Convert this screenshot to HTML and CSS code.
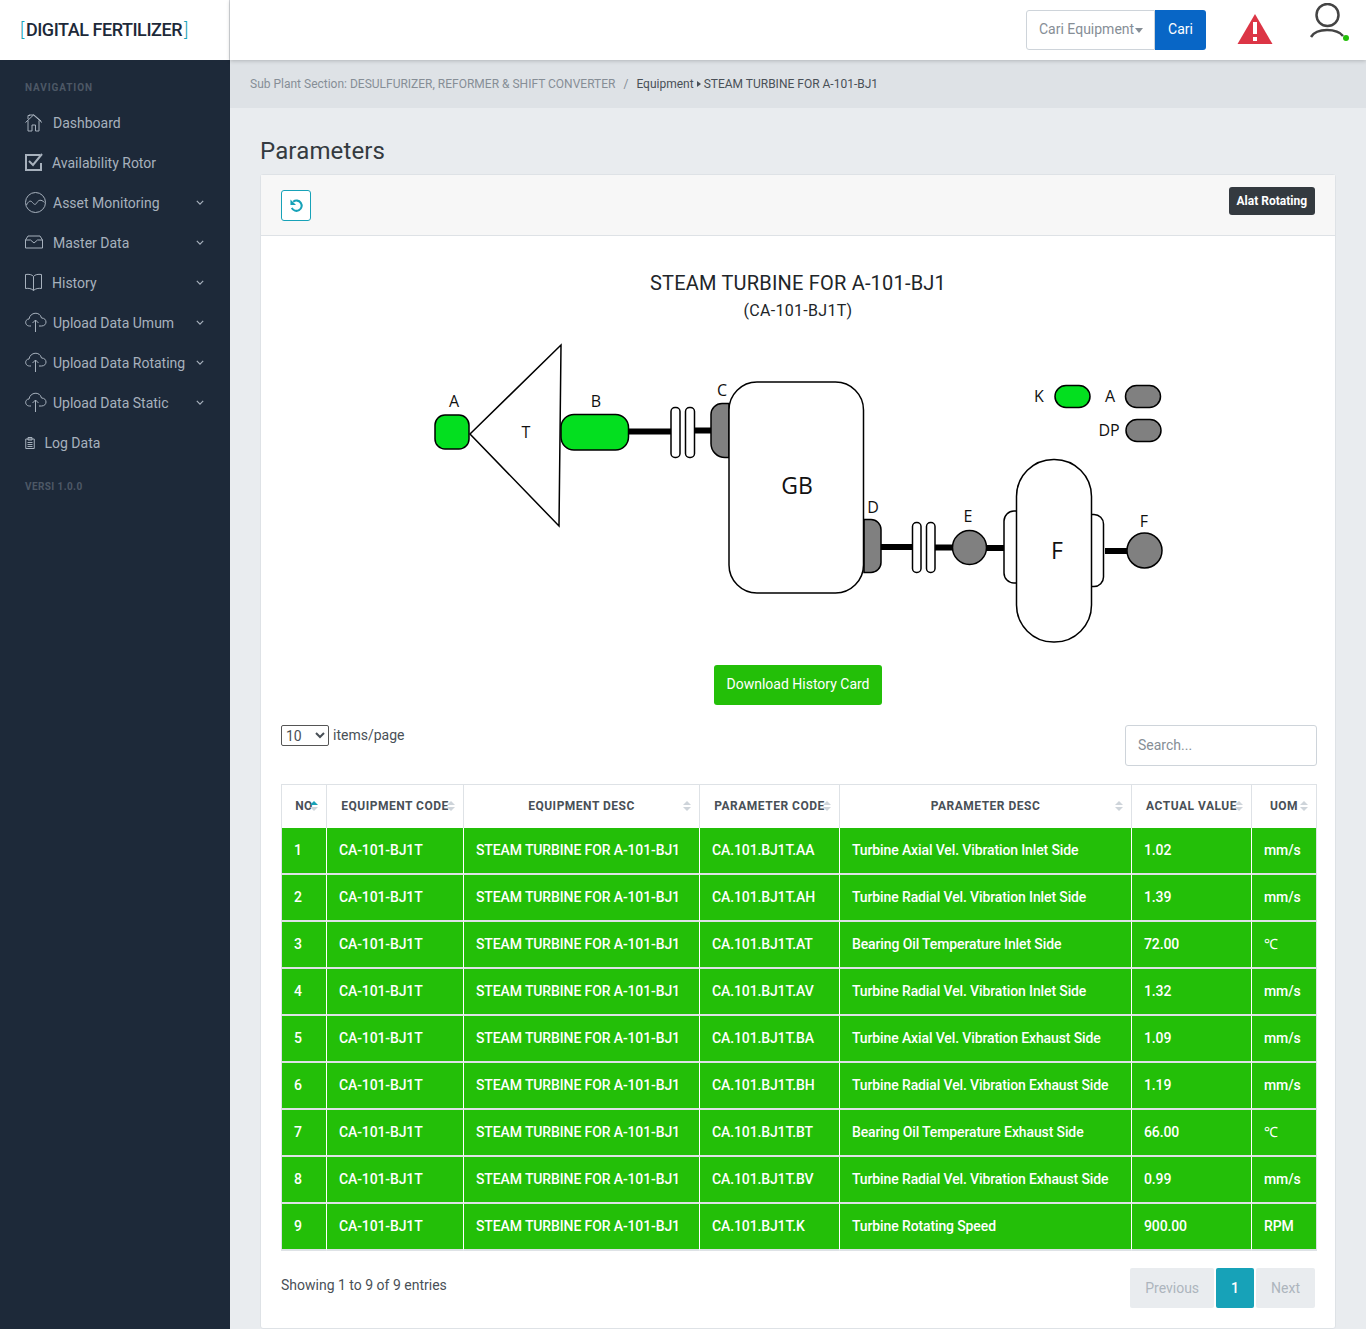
FILE: index.html
```html
<!DOCTYPE html>
<html lang="id">
<head>
    <meta charset="UTF-8">
    <meta name="viewport" content="width=device-width, initial-scale=1.0">
    <title>Digital Fertilizer - Parameters</title>
    <link rel="stylesheet" href="styles.css">
</head>
<body>
    <aside class="sidebar">
        <div class="logo"><span class="bracket">[</span>DIGITAL FERTILIZER<span class="bracket">]</span></div>
        <div class="nav-label">NAVIGATION</div>
        <nav class="nav">
            <a class="nav-item"><svg class="ico w28" viewBox="0 0 28 24"><path d="M.5 11.500 8.500 4l8.500 7.500M3 9.500V20h4v-6h3.500v6H14V9.500M3 8V4.500h2M4 4h5l7 6" /></svg>Dashboard</a>
            <a class="nav-item"><svg class="ico w27 thick" viewBox="0 0 27 24"><path d="M15 4H1v15h15v-7" /><path d="M4 10l4 4 9-11" /></svg>Availability Rotor</a>
            <a class="nav-item"><svg class="ico w28" viewBox="0 0 28 24"><circle cx="10.500" cy="11.500" r="10" /><path d="M1.500 14c2-4 4-5 6-2.500s3 2.500 4.500 0 4-3.500 7.500 0" /></svg>Asset Monitoring<svg class="chev" viewBox="0 0 10 6"><path d="M1 1l4 4 4-4" /></svg></a>
            <a class="nav-item"><svg class="ico w28" viewBox="0 0 28 24"><path d="M.5 9 3 5h12l2.500 4v8H.5zM.5 9h5l3.500 3 3.500-3h5" /></svg>Master Data<svg class="chev" viewBox="0 0 10 6"><path d="M1 1l4 4 4-4" /></svg></a>
            <a class="nav-item"><svg class="ico w27" viewBox="0 0 27 24"><path d="M8.500 5.500C7 3.500 4 3 .5 3.500v14c3-.5 6 0 8 2 2-2 5-2.500 8-2v-14c-3.500-.5-6.500 0-8 2zM8.500 5.500v14" /></svg>History<svg class="chev" viewBox="0 0 10 6"><path d="M1 1l4 4 4-4" /></svg></a>
            <a class="nav-item"><svg class="ico w28" viewBox="0 0 28 24"><path d="M6 15H4.500C-.5 15-.5 8 4 8 5 1 15 0 16.500 7c6 0 6 8 0 8H14M10.500 21V9M7.500 12l3-3 3 3" /></svg>Upload Data Umum<svg class="chev" viewBox="0 0 10 6"><path d="M1 1l4 4 4-4" /></svg></a>
            <a class="nav-item"><svg class="ico w28" viewBox="0 0 28 24"><path d="M6 15H4.500C-.5 15-.5 8 4 8 5 1 15 0 16.500 7c6 0 6 8 0 8H14M10.500 21V9M7.500 12l3-3 3 3" /></svg>Upload Data Rotating<svg class="chev" viewBox="0 0 10 6"><path d="M1 1l4 4 4-4" /></svg></a>
            <a class="nav-item"><svg class="ico w28" viewBox="0 0 28 24"><path d="M6 15H4.500C-.5 15-.5 8 4 8 5 1 15 0 16.500 7c6 0 6 8 0 8H14M10.500 21V9M7.500 12l3-3 3 3" /></svg>Upload Data Static<svg class="chev" viewBox="0 0 10 6"><path d="M1 1l4 4 4-4" /></svg></a>
            <a class="nav-item"><svg class="ico w20" viewBox="0 0 19.500 24"><path d="M.75 8h8.500v9.500H.75zM3 6.500h4V9H3zM2.500 11.500h5M2.500 13.500h5M2.500 15.500h5" /></svg>Log Data</a>
        </nav>
        <div class="nav-label version">VERSI 1.0.0</div>
    </aside>

    <div class="main">
        <header class="topbar">
            <div class="search-group">
                <div class="search-select">Cari Equipment<span class="caret"></span></div>
                <button class="btn-cari">Cari</button>
            </div>
            <svg class="warn" viewBox="0 0 36 32"><path d="M18 1 35.500 31H.5z" fill="#dc3545" /><path d="M16 9h4v12h-4zM16 24h4v4h-4z" fill="#fff" /></svg>
            <div class="user">
                <svg viewBox="0 0 38 38"><circle cx="18.500" cy="12" r="11" /><path d="M2 34c3-5 9-7 16-7s13 2 16 6" /></svg>
                <span class="user-dot"></span>
            </div>
        </header>

        <div class="breadcrumb">
            <span>Sub Plant Section: DESULFURIZER, REFORMER &amp; SHIFT CONVERTER</span>
            <span class="sep">/</span>
            <span class="crumb-dark">Equipment<span class="crumb-arrow"></span>STEAM TURBINE FOR A-101-BJ1</span>
        </div>

        <main class="content">
            <h1 class="page-title">Parameters</h1>
            <section class="card">
                <div class="card-head">
                    <button class="btn-refresh"><svg viewBox="0 0 16 16"><path d="M4.500 4A5.500 5.500 0 1 1 3 10.500" /><path class="arrow-head" d="M1.500 1.500v6h6z" /></svg></button>
                    <span class="badge">Alat Rotating</span>
                </div>
                <div class="card-body">
                    <h2 class="eq-title">STEAM TURBINE FOR A-101-BJ1</h2>
                    <p class="eq-code">(CA-101-BJ1T)</p>

                    <div class="diagram-wrap">
                        <svg class="diagram" width="756" height="320" viewBox="421 335 756 320">
                            <g class="shaft">
                                <path d="M629 431.500h42M695 430.500h17M881 547h32M935 547.500h18M986 548h18M1105 551h22" />
                            </g>
                            <g class="part">
                                <path class="white" d="M470 434 561 345 559 526z" />
                                <rect class="green" x="435" y="415" width="34" height="34" rx="10" />
                                <rect class="green" x="561" y="414.500" width="67.500" height="35.500" rx="13" />
                                <rect class="white" x="671" y="407.500" width="9" height="50" rx="4" />
                                <rect class="white" x="685.500" y="407.500" width="9" height="50" rx="4" />
                                <path class="grey" d="M729 403.500h-7a11 11 0 0 0-11 11v29a14 14 0 0 0 14 14h4z" />
                                <path class="grey" d="M864 519.500h7a10 10 0 0 1 10 10v33a10 10 0 0 1-10 10h-7z" />
                                <rect class="white" x="729" y="382" width="134.500" height="211" rx="28" />
                                <rect class="white" x="912.500" y="522.500" width="8.500" height="50" rx="4" />
                                <rect class="white" x="926.500" y="522.500" width="8.500" height="50" rx="4" />
                                <circle class="grey" cx="969.500" cy="547.500" r="17" />
                                <path class="white" d="M1017 511h-3a10 10 0 0 0-10 10v52a10 10 0 0 0 10 10h3z" />
                                <path class="white" d="M1091 514.500h3a9.500 9.500 0 0 1 9.500 9.500v53a9.500 9.500 0 0 1-9.500 9.500h-3z" />
                                <rect class="white" x="1016.500" y="459.500" width="75" height="182.500" rx="37" />
                                <circle class="grey" cx="1144.500" cy="550.500" r="17.500" />
                                <rect class="green" x="1055" y="385.500" width="35" height="22" rx="11" />
                                <rect class="grey" x="1125.500" y="385.500" width="35" height="22" rx="11" />
                                <rect class="grey" x="1126" y="419.500" width="35" height="22" rx="11" />
                            </g>
                            <g class="labels">
                                <text x="454" y="407">A</text>
                                <text x="526" y="438">T</text>
                                <text x="596" y="407">B</text>
                                <text x="722" y="396">C</text>
                                <text class="big" x="797" y="494">GB</text>
                                <text x="873" y="513">D</text>
                                <text x="968" y="522">E</text>
                                <text class="big" x="1057" y="559">F</text>
                                <text x="1144" y="527">F</text>
                                <text x="1039" y="402">K</text>
                                <text x="1110" y="402">A</text>
                                <text x="1109" y="436">DP</text>
                            </g>
                        </svg>
                    </div>

                    <div class="download-row"><button class="btn-download">Download History Card</button></div>

                    <div class="table-controls">
                        <div class="page-size">
                            <select class="size-select"><option>10</option></select>
                            <span class="size-label">items/page</span>
                        </div>
                        <input class="table-search" type="text" placeholder="Search...">
                    </div>

                    <table class="data-table">
                        <colgroup>
                            <col class="c-no"><col class="c-code"><col class="c-desc"><col class="c-pcode"><col class="c-pdesc"><col class="c-val"><col class="c-uom">
                        </colgroup>
                        <thead>
                            <tr>
                                <th>NO<span class="sort asc"></span></th>
                                <th>EQUIPMENT CODE<span class="sort"></span></th>
                                <th>EQUIPMENT DESC<span class="sort"></span></th>
                                <th>PARAMETER CODE<span class="sort"></span></th>
                                <th>PARAMETER DESC<span class="sort"></span></th>
                                <th>ACTUAL VALUE<span class="sort"></span></th>
                                <th>UOM<span class="sort"></span></th>
                            </tr>
                        </thead>
                        <tbody>
                            <tr><td>1</td><td>CA-101-BJ1T</td><td>STEAM TURBINE FOR A-101-BJ1</td><td>CA.101.BJ1T.AA</td><td>Turbine Axial Vel. Vibration Inlet Side</td><td>1.02</td><td>mm/s</td></tr>
                            <tr><td>2</td><td>CA-101-BJ1T</td><td>STEAM TURBINE FOR A-101-BJ1</td><td>CA.101.BJ1T.AH</td><td>Turbine Radial Vel. Vibration Inlet Side</td><td>1.39</td><td>mm/s</td></tr>
                            <tr><td>3</td><td>CA-101-BJ1T</td><td>STEAM TURBINE FOR A-101-BJ1</td><td>CA.101.BJ1T.AT</td><td>Bearing Oil Temperature Inlet Side</td><td>72.00</td><td>℃</td></tr>
                            <tr><td>4</td><td>CA-101-BJ1T</td><td>STEAM TURBINE FOR A-101-BJ1</td><td>CA.101.BJ1T.AV</td><td>Turbine Radial Vel. Vibration Inlet Side</td><td>1.32</td><td>mm/s</td></tr>
                            <tr><td>5</td><td>CA-101-BJ1T</td><td>STEAM TURBINE FOR A-101-BJ1</td><td>CA.101.BJ1T.BA</td><td>Turbine Axial Vel. Vibration Exhaust Side</td><td>1.09</td><td>mm/s</td></tr>
                            <tr><td>6</td><td>CA-101-BJ1T</td><td>STEAM TURBINE FOR A-101-BJ1</td><td>CA.101.BJ1T.BH</td><td>Turbine Radial Vel. Vibration Exhaust Side</td><td>1.19</td><td>mm/s</td></tr>
                            <tr><td>7</td><td>CA-101-BJ1T</td><td>STEAM TURBINE FOR A-101-BJ1</td><td>CA.101.BJ1T.BT</td><td>Bearing Oil Temperature Exhaust Side</td><td>66.00</td><td>℃</td></tr>
                            <tr><td>8</td><td>CA-101-BJ1T</td><td>STEAM TURBINE FOR A-101-BJ1</td><td>CA.101.BJ1T.BV</td><td>Turbine Radial Vel. Vibration Exhaust Side</td><td>0.99</td><td>mm/s</td></tr>
                            <tr><td>9</td><td>CA-101-BJ1T</td><td>STEAM TURBINE FOR A-101-BJ1</td><td>CA.101.BJ1T.K</td><td>Turbine Rotating Speed</td><td>900.00</td><td>RPM</td></tr>
                        </tbody>
                    </table>

                    <div class="table-foot">
                        <span class="entries">Showing 1 to 9 of 9 entries</span>
                        <div class="pager">
                            <a class="page-btn prev">Previous</a>
                            <a class="page-btn current">1</a>
                            <a class="page-btn next">Next</a>
                        </div>
                    </div>
                </div>
            </section>
        </main>
    </div>
</body>
</html>
```

FILE: styles.css
```css
* {
    box-sizing: border-box;
}

body {
    margin: 0;
    height: 100vh;
    overflow: hidden;
    display: flex;
    font-family: Roboto, "Liberation Sans", sans-serif;
    font-size: 14px;
    color: #495057;
    background: #e9ecef;
}

/* sidebar */
.sidebar {
    width: 230px;
    flex-shrink: 0;
    background: #1d2939;
    color: #a7b1bd;
}

.logo {
    height: 60px;
    background: #fff;
    border-right: 1px solid #d5d8dc;
    padding: 0 0 2px 20px;
    display: flex;
    align-items: center;
    font-size: 18px;
    font-weight: 500;
    letter-spacing: -0.45px;
    color: #1d2939;
}

.bracket {
    font-weight: 300;
    color: #17a2b8;
}

.bracket:first-child {
    margin-right: 2px;
}

.bracket:last-child {
    margin-left: 2px;
}

.nav-label {
    padding: 22px 25px 0;
    font-size: 10px;
    line-height: 12px;
    font-weight: 700;
    letter-spacing: 0.9px;
    color: #4d5866;
}

.version {
    padding-top: 18px;
    letter-spacing: 0.4px;
}

.nav {
    margin-top: 9px;
}

.nav-item {
    height: 40px;
    padding: 0 25px;
    display: flex;
    align-items: center;
    white-space: nowrap;
}

.ico {
    height: 24px;
    flex-shrink: 0;
    fill: none;
    stroke: #a7b1bd;
    stroke-width: 1;
}

.ico.thick {
    stroke-width: 2;
}

.w28 {
    width: 28px;
}

.w27 {
    width: 27px;
}

.w20 {
    width: 19.5px;
}

.chev {
    width: 8px;
    height: 5px;
    margin: 0 1px 2px auto;
    flex-shrink: 0;
    fill: none;
    stroke: #a7b1bd;
    stroke-width: 1.5;
}

/* top */
.main {
    flex: 1;
    min-width: 0;
}

.topbar {
    height: 60px;
    background: #fff;
    box-shadow: 0 1px 4px rgba(0, 0, 0, 0.2);
    display: flex;
    align-items: flex-start;
    position: relative;
    padding-left: 796px;
}

.search-group {
    display: flex;
    margin-top: 10px;
}

.search-select {
    width: 129px;
    height: 40px;
    padding: 0 0 2px 12px;
    display: flex;
    align-items: center;
    border: 1px solid #ced4da;
    border-radius: 3px 0 0 3px;
    color: #868e96;
}

.caret {
    margin: 2px 0 0 1px;
    border-top: 5px solid #868e96;
    border-left: 4px solid transparent;
    border-right: 4px solid transparent;
}

.btn-cari {
    width: 51px;
    height: 40px;
    padding: 0 0 2px;
    border: 0;
    border-radius: 0 3px 3px 0;
    background: #0866c6;
    color: #fff;
    font-family: inherit;
    font-size: 14px;
}

.warn {
    width: 36px;
    height: 32px;
    margin: 13px 0 0 31px;
}

.user {
    width: 38px;
    height: 38px;
    margin: 3px 0 0 36px;
    position: relative;
}

.user svg {
    width: 38px;
    height: 38px;
    fill: none;
    stroke: #444;
    stroke-width: 2.5;
}

.user-dot {
    position: absolute;
    right: -2px;
    bottom: 0;
    width: 6px;
    height: 6px;
    border-radius: 50%;
    background: #23bf08;
}

.breadcrumb {
    height: 48px;
    padding-left: 20px;
    display: flex;
    align-items: center;
    background: #dee2e6;
    font-size: 12px;
    color: #868e96;
}

.sep {
    margin: 0 8px;
}

.crumb-dark {
    color: #495057;
}

.crumb-arrow {
    display: inline-block;
    margin: 0 3px;
    vertical-align: 1px;
    border-left: 4px solid #495057;
    border-top: 3px solid transparent;
    border-bottom: 3px solid transparent;
}

/* content */
.content {
    padding: 0 30px;
}

.page-title {
    margin: 29px 0 8px;
    font-size: 24px;
    line-height: 29px;
    font-weight: 400;
    letter-spacing: 0.15px;
    color: #343a40;
}

.card {
    background: #fff;
    border: 1px solid #dee2e6;
    border-radius: 3px;
}

.card-head {
    height: 61px;
    padding: 0 20px;
    display: flex;
    align-items: flex-start;
    justify-content: space-between;
    background: #f7f7f7;
    border-bottom: 1px solid #dee2e6;
}

.btn-refresh {
    width: 30px;
    height: 31px;
    margin-top: 15px;
    padding: 0;
    display: flex;
    align-items: center;
    justify-content: center;
    background: #fff;
    border: 1px solid #17a2b8;
    border-radius: 3px;
}

.btn-refresh svg {
    width: 15px;
    height: 15px;
    fill: none;
    stroke: #17a2b8;
    stroke-width: 2.2;
}

.btn-refresh .arrow-head {
    fill: #17a2b8;
    stroke: none;
}

.badge {
    height: 28px;
    margin-top: 12px;
    padding: 0 8px;
    display: flex;
    align-items: center;
    background: #343a40;
    color: #fff;
    border-radius: 3px;
    font-size: 12px;
    font-weight: 700;
}

.card-body {
    padding: 35px 18px 20px 20px;
}

.eq-title {
    margin: 0;
    padding-right: 2px;
    font-size: 20px;
    line-height: 24px;
    font-weight: 400;
    letter-spacing: 0.2px;
    text-align: center;
    color: #212529;
}

.eq-code {
    margin: 4px 0 0;
    padding-right: 2px;
    font-size: 16px;
    line-height: 24px;
    letter-spacing: 0.3px;
    text-align: center;
    color: #212529;
}

.diagram-wrap {
    margin-top: 12px;
    display: flex;
    justify-content: center;
}

.diagram {
    display: block;
}

.shaft path {
    fill: none;
    stroke: #000;
    stroke-width: 6;
}

.part * {
    stroke: #000;
    stroke-width: 1.5;
}

.white {
    fill: #fff;
}

.green {
    fill: #03df1f;
}

.grey {
    fill: #808080;
}

.labels text {
    font-family: "Open Sans", sans-serif;
    font-size: 16px;
    text-anchor: middle;
    fill: #111;
}

.labels .big {
    font-size: 23px;
}

.download-row {
    margin-top: 10px;
    padding-right: 2px;
    display: flex;
    justify-content: center;
}

.btn-download {
    height: 40px;
    padding: 0 12px 2px;
    border: 0;
    border-radius: 3px;
    background: #23bf08;
    color: #fff;
    font-family: inherit;
    font-size: 14px;
}

.table-controls {
    margin-top: 20px;
    display: flex;
    justify-content: space-between;
    align-items: flex-start;
}

.page-size {
    display: flex;
    align-items: center;
    gap: 3px;
    color: #495057;
}

.size-label {
    padding: 0 0 2px 1px;
}

.size-select {
    width: 48px;
    height: 21px;
    font-family: inherit;
    font-size: 14px;
    color: #495057;
    background: #fff;
    border: 1px solid #555;
    border-radius: 2px;
}

.table-search {
    width: 192px;
    height: 41px;
    padding: 0 12px 2px;
    border: 1px solid #ced4da;
    border-radius: 3px;
    font-family: inherit;
    font-size: 14px;
}

.table-search::placeholder {
    color: #868e96;
}

.data-table {
    width: 1036px;
    margin-top: 18px;
    table-layout: fixed;
    border-collapse: separate;
    border-spacing: 0;
}

.c-no { width: 46px; }
.c-code { width: 137px; }
.c-desc { width: 236px; }
.c-pcode { width: 140px; }
.c-pdesc { width: 292px; }
.c-val { width: 120px; }
.c-uom { width: 65px; }

.data-table th {
    position: relative;
    height: 44px;
    padding: 0 11px 2px;
    background: #fff;
    border-top: 1px solid #dee2e6;
    border-right: 1px solid #dee2e6;
    font-size: 12px;
    font-weight: 700;
    letter-spacing: 0.5px;
    text-align: center;
    white-space: nowrap;
    color: #495057;
}

.data-table th:first-child,
.data-table td:first-child {
    border-left: 1px solid #dee2e6;
}

.sort {
    position: absolute;
    right: 8px;
    top: 16px;
    width: 8px;
    height: 10px;
}

.sort::before,
.sort::after {
    content: "";
    position: absolute;
    left: 0;
    border-left: 4px solid transparent;
    border-right: 4px solid transparent;
}

.sort::before {
    top: 0;
    border-bottom: 4px solid #ced4da;
}

.sort::after {
    bottom: 0;
    border-top: 4px solid #ced4da;
}

.sort.asc::before {
    border-bottom-color: #17a2b8;
}

.data-table td {
    height: 47px;
    padding: 0 12px 2px;
    background: #23bf08;
    background-clip: padding-box;
    border-right: 1px solid #fff;
    border-bottom: 2px solid #dee2e6;
    color: #fff;
    font-weight: 500;
    letter-spacing: -0.12px;
    white-space: nowrap;
}

.data-table td:last-child {
    border-right: 1px solid #dee2e6;
}

.table-foot {
    margin-top: 17px;
    display: flex;
    justify-content: space-between;
    align-items: flex-start;
}

.entries {
    margin-top: 9px;
}

.pager {
    display: flex;
    gap: 2px;
    margin-right: 2px;
}

.page-btn {
    height: 40px;
    padding: 0 15px;
    display: flex;
    align-items: center;
    background: #e9ecef;
    color: #adb5bd;
    border-radius: 2px;
}

.page-btn.current {
    background: #17a2b8;
    color: #fff;
    font-weight: 500;
}
```
